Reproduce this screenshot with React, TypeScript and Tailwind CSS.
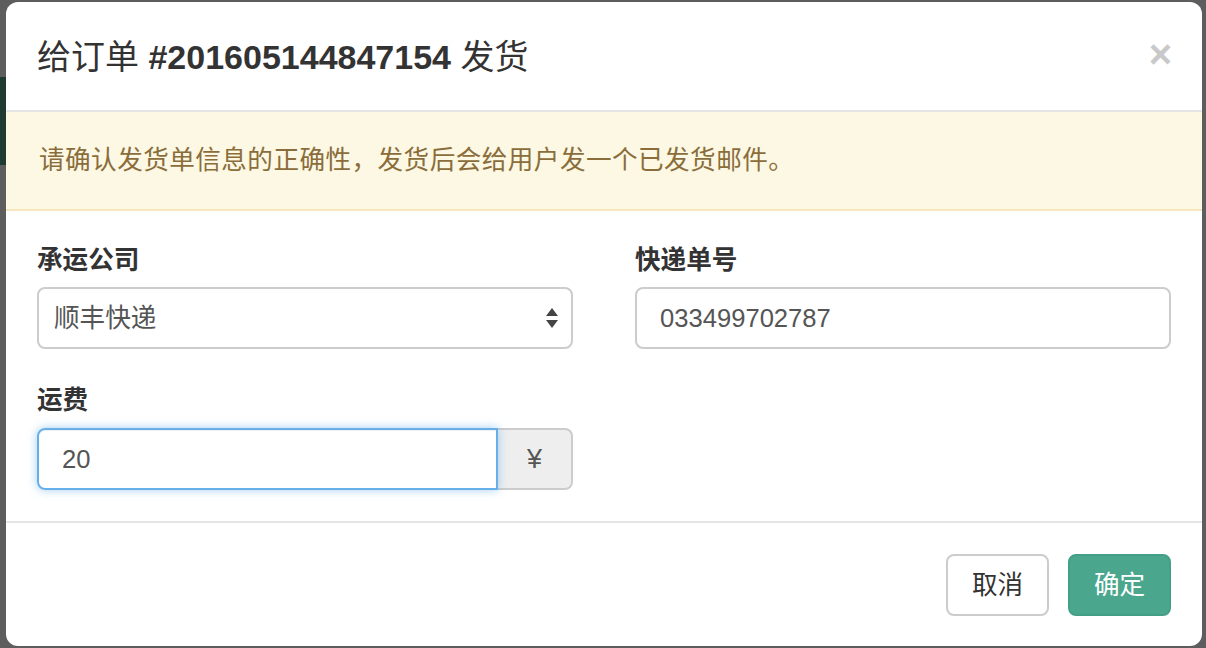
import React from "react";

const font = { fontFamily: '"Liberation Sans", "Noto Sans CJK SC", sans-serif' };

const SelectArrows = () => (
  <svg width="14" height="22" viewBox="0 0 14 22" className="text-[#444]">
    <path d="M7 1 L13 9 L1 9 Z" fill="currentColor" />
    <path d="M1 13 L13 13 L7 21 Z" fill="currentColor" />
  </svg>
);

const App = () => {
  return (
    <div
      className="relative w-[1206px] h-[648px] overflow-hidden bg-[#5d5d5d] pt-[2px] pl-[6px]"
      style={font}
    >
      <div className="absolute left-0 top-[77px] w-[6px] h-[88px] bg-[#1f3b31]" />

      <div className="relative w-[1196px] h-[644px] bg-white rounded-[12px] overflow-hidden flex flex-col">
        {/* header */}
        <div className="h-[110px] shrink-0 flex items-center justify-between pl-[31px] pr-[30px] border-b-2 border-[#e5e5e5]">
          <h4 className="text-[34px] leading-none text-[#333] mt-[2px]">
            给订单 <span className="font-bold">#201605144847154</span> 发货
          </h4>
          <button className="text-[40px] font-bold leading-none text-[#c9c9c9] mb-[4px]">×</button>
        </div>

        {/* alert */}
        <div className="h-[99px] shrink-0 flex items-center px-[33px] bg-[#fcf8e3] border-b-2 border-[#f5e6bd]">
          <p className="text-[25.6px] leading-none text-[#8a6d3b] tracking-[0.45px]">
            请确认发货单信息的正确性，发货后会给用户发一个已发货邮件。
          </p>
        </div>

        {/* body */}
        <div className="grid grid-cols-2 gap-x-[62px] px-[31px] pt-[31px] pb-[31px] border-b-2 border-[#e5e5e5]">
          <div>
            <label className="h-[36px] flex items-center text-[25.6px] font-bold text-[#333] mb-[9px]">
              承运公司
            </label>
            <div className="h-[62px] flex items-center justify-between border-2 border-[#ccc] rounded-[8px] pl-[15px] pr-[12px] text-[25.6px] text-[#555]">
              <span>顺丰快递</span>
              <SelectArrows />
            </div>
          </div>
          <div>
            <label className="h-[36px] flex items-center text-[25.6px] font-bold text-[#333] mb-[9px]">
              快递单号
            </label>
            <div className="h-[62px] flex items-center border-2 border-[#ccc] rounded-[8px] pl-[23px] text-[25.6px] text-[#555]">
              033499702787
            </div>
          </div>

          <div className="mt-[33px]">
            <label className="h-[36px] flex items-center text-[25.6px] font-bold text-[#333] mb-[10px]">
              运费
            </label>
            <div className="h-[62px] flex">
              <div className="w-[461px] h-full flex items-center border-2 border-[#66afe9] rounded-l-[8px] pl-[23px] text-[25.6px] text-[#555] shadow-[inset_0_1px_1px_rgba(0,0,0,0.075),0_0_10px_rgba(102,175,233,0.6)] relative z-10">
                20
              </div>
              <div className="flex-1 h-full flex items-center justify-center bg-[#eee] border-2 border-l-0 border-[#ccc] rounded-r-[8px] text-[27px] text-[#555]">
                ¥
              </div>
            </div>
          </div>
          <div />
        </div>

        {/* footer */}
        <div className="flex justify-end gap-[19px] pt-[31px] pr-[31px]">
          <button className="w-[103px] h-[62px] border-2 border-[#ccc] rounded-[8px] bg-white text-[25.6px] text-[#333]">
            取消
          </button>
          <button className="w-[103px] h-[62px] border-2 border-[#43a086] rounded-[8px] bg-[#4aa78e] text-[25.6px] text-white">
            确定
          </button>
        </div>
      </div>
    </div>
  );
};

export default App;
